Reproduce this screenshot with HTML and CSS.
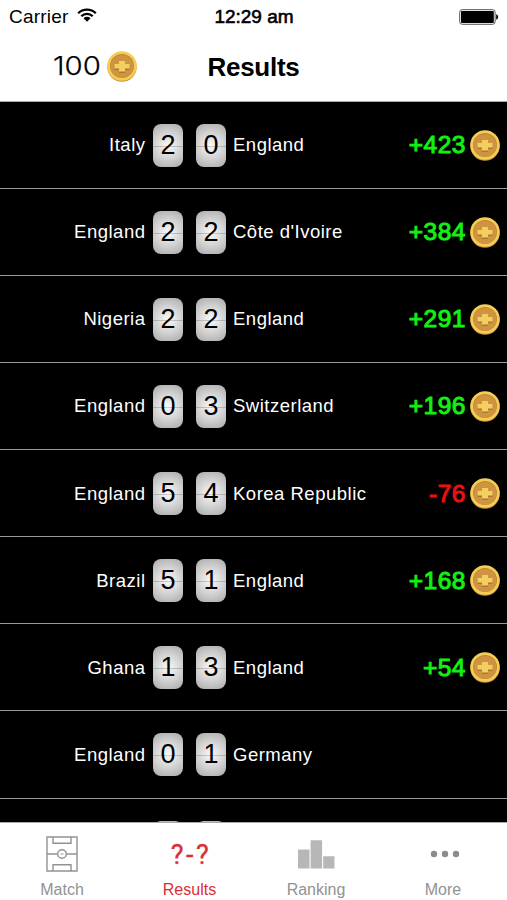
FILE: index.html
```html
<!DOCTYPE html>
<html lang="en">
<head>
  <meta charset="UTF-8" />
  <title>Results</title>
  <link rel="stylesheet" href="styles.css">
</head>
<body>
  <svg width="0" height="0" class="defs">
    <symbol id="coin" viewBox="0 0 30 31">
      <circle cx="15" cy="16" r="14.700" fill="#c6923a" />
      <circle cx="15" cy="15" r="14.700" fill="#f5cd55" />
      <circle cx="15" cy="15" r="12" fill="#bd8434" />
      <circle cx="15" cy="15.400" r="11.500" fill="#cf9440" />
      <path d="M12 11h6v3h4.500v5H18v3h-6v-3H7.500v-5H12z" fill="#ad772e" />
      <path d="M12 10h6v3h4.500v4.500H18v3h-6v-3H7.500V13H12z" fill="#f3cf62" />
    </symbol>
  </svg>

  <div class="screen">
    <div class="status">
      <div class="carrier">
        <span>Carrier</span>
        <svg class="wifi" width="20" height="14" viewBox="0 0 20 14">
          <path d="M1.200 5.200a12.500 12.500 0 0 1 17.600 0M4.300 8.300a8.100 8.100 0 0 1 11.400 0" fill="none" stroke="#000" stroke-width="2.300" />
          <path d="M6.500 10.200a5 5 0 0 1 7 0L10 13.700z" />
        </svg>
      </div>
      <div class="time">12:29 am</div>
      <svg class="battery" width="40" height="16" viewBox="0 0 40 16">
        <rect x="0.700" y="0.700" width="35.400" height="14.600" rx="2.500" fill="#fff" stroke="#555" stroke-width="1" />
        <rect x="2" y="2" width="32.800" height="12" rx="1" />
        <path d="M37.200 5.200q2 .7 2 2.800t-2 2.800z" />
      </svg>
    </div>

    <header class="navbar">
      <div class="balance">
        <span>100</span>
        <svg class="coin"><use href="#coin" /></svg>
      </div>
      <h1>Results</h1>
      <div></div>
    </header>

    <main class="list" id="list"></main>

    <nav class="tabs">
      <div class="tab">
        <svg width="32" height="38" viewBox="0 0 32 38" fill="none" stroke="#929292" stroke-width="1.400">
          <path d="M1 2h30v34H1zM7 2v6.300h18V2M7 36v-6.300h18V36M1 19h10.700M20.300 19H31" />
          <circle cx="16" cy="19" r="4.300" />
          <path d="M14.500 19h3" stroke-width="1" />
        </svg>
        <span>Match</span>
      </div>
      <div class="tab active">
        <div class="guess">?-?</div>
        <span>Results</span>
      </div>
      <div class="tab">
        <svg width="37" height="38" viewBox="0 0 37 38" fill="#b7b7b7">
          <path d="M0 14.500h11.500V33.500H0zM12.600 5.200h11.500v28.300H12.600zM25.200 21.200h11.300v12.300H25.200z" />
        </svg>
        <span>Ranking</span>
      </div>
      <div class="tab">
        <svg width="30" height="38" viewBox="0 0 30 38" fill="#8c8c8c">
          <circle cx="4" cy="19" r="3.200" />
          <circle cx="15" cy="19" r="3.200" />
          <circle cx="26" cy="19" r="3.200" />
        </svg>
        <span>More</span>
      </div>
    </nav>
  </div>

  <script src="script.js"></script>
</body>
</html>
```

FILE: styles.css
```css
* {
  box-sizing: border-box;
}

body {
  margin: 0;
  background: #fff;
  font-family: "Liberation Sans", Arial, sans-serif;
  overflow: hidden;
}

.defs {
  display: none;
}

.screen {
  height: 900px;
  display: flex;
  flex-direction: column;
}

/* Top bars */
.status {
  height: 33px;
  padding: 0 8px 0 9px;
  display: grid;
  grid-template-columns: 1fr auto 1fr;
  align-items: center;
  font-size: 19px;
}

.carrier {
  display: flex;
  align-items: center;
  gap: 9px;
  letter-spacing: 0.2px;
}

.wifi {
  margin-top: -3px;
}

.time {
  -webkit-text-stroke: 0.6px #000;
}

.battery {
  justify-self: end;
}

.navbar {
  height: 68.500px;
  display: grid;
  grid-template-columns: 1fr auto 1fr;
  align-items: center;
  border-bottom: 1px solid #aaa;
}

.navbar h1 {
  margin: 1px 0 0;
  font-size: 26px;
  letter-spacing: -0.3px;
}

.balance {
  display: flex;
  align-items: center;
  padding-left: 53px;
  font-family: Inter, sans-serif;
  font-size: 26px;
  font-weight: 300;
  line-height: 30px;
}

.balance span {
  width: 54px;
  margin-top: -1px;
  transform: scaleX(1.13);
  transform-origin: left;
  -webkit-text-stroke: 0.25px #000;
}

.coin {
  width: 30px;
  height: 31px;
}

/* Match list */
.list {
  flex: 1;
  min-height: 0;
  overflow: hidden;
  background: #000;
  color: #fff;
}

.row {
  height: 87.140px;
  padding-right: 7px;
  display: grid;
  grid-template-columns: 145.500px 30px 30px 1fr auto;
  align-items: center;
  border-bottom: 1px solid #999;
}

.team {
  padding-top: 1px;
  font-size: 18.500px;
  letter-spacing: 0.5px;
  white-space: nowrap;
}

.home {
  text-align: right;
}

.away {
  margin-left: 27.500px;
}

.score {
  height: 43px;
  margin: 1px -7.500px 0 7.500px;
  border-radius: 8px;
  background:
    linear-gradient(transparent 22px, rgba(0, 0, 0, 0.18) 22px, rgba(0, 0, 0, 0.18) 23px, transparent 23px),
    radial-gradient(circle at center, #fafafa, #cfcfcf 55%, #a8a8a8);
  color: #000;
  font-size: 27px;
  line-height: 43px;
  text-align: center;
}

.home-score + .score {
  margin-left: 20.500px;
  margin-right: -20.500px;
}

.points {
  padding-top: 1px;
  display: flex;
  align-items: center;
  gap: 4px;
  font-size: 24.500px;
  letter-spacing: 0.5px;
  -webkit-text-stroke: 1px;
}

.win {
  color: #12f112;
}

.loss {
  color: #f00f0f;
}

/* Bottom tabs */
.tabs {
  height: 78px;
  display: grid;
  grid-template-columns: 124px 131px 122px 132px;
  border-top: 1px solid #aaa;
  background: #fff;
}

.tab {
  display: flex;
  flex-direction: column;
  align-items: center;
  gap: 7px;
  padding-top: 12px;
  color: #929292;
  font-size: 16px;
  line-height: 20px;
}

.tab:last-child svg {
  margin-left: 3px;
}

.active {
  color: #dc2d34;
}

.guess {
  height: 38px;
  padding-left: 3px;
  font-family: Roboto, sans-serif;
  font-size: 27px;
  letter-spacing: 2.500px;
  line-height: 40px;
  -webkit-text-stroke: 0.3px;
}
```

FILE: script.js
```js
const matches = [
  ["Italy", 2, 0, "England", 423],
  ["England", 2, 2, "Côte d'Ivoire", 384],
  ["Nigeria", 2, 2, "England", 291],
  ["England", 0, 3, "Switzerland", 196],
  ["England", 5, 4, "Korea Republic", -76],
  ["Brazil", 5, 1, "England", 168],
  ["Ghana", 1, 3, "England", 54],
  ["England", 0, 1, "Germany", null],
  ["", "", "", "", null],
];

// Matches without a bet have no points on the right
function pointsHtml(points) {
  if (points === null) return "";
  const sign = points > 0 ? "+" : "";
  return `
    <div class="points ${points > 0 ? "win" : "loss"}">
      <span>${sign}${points}</span>
      <svg class="coin"><use href="#coin" /></svg>
    </div>`;
}

document.getElementById("list").innerHTML = matches
  .map(([home, a, b, away, points]) => `
    <div class="row">
      <div class="team home">${home}</div>
      <div class="score home-score">${a}</div>
      <div class="score">${b}</div>
      <div class="team away">${away}</div>
      ${pointsHtml(points)}
    </div>`)
  .join("");
```
